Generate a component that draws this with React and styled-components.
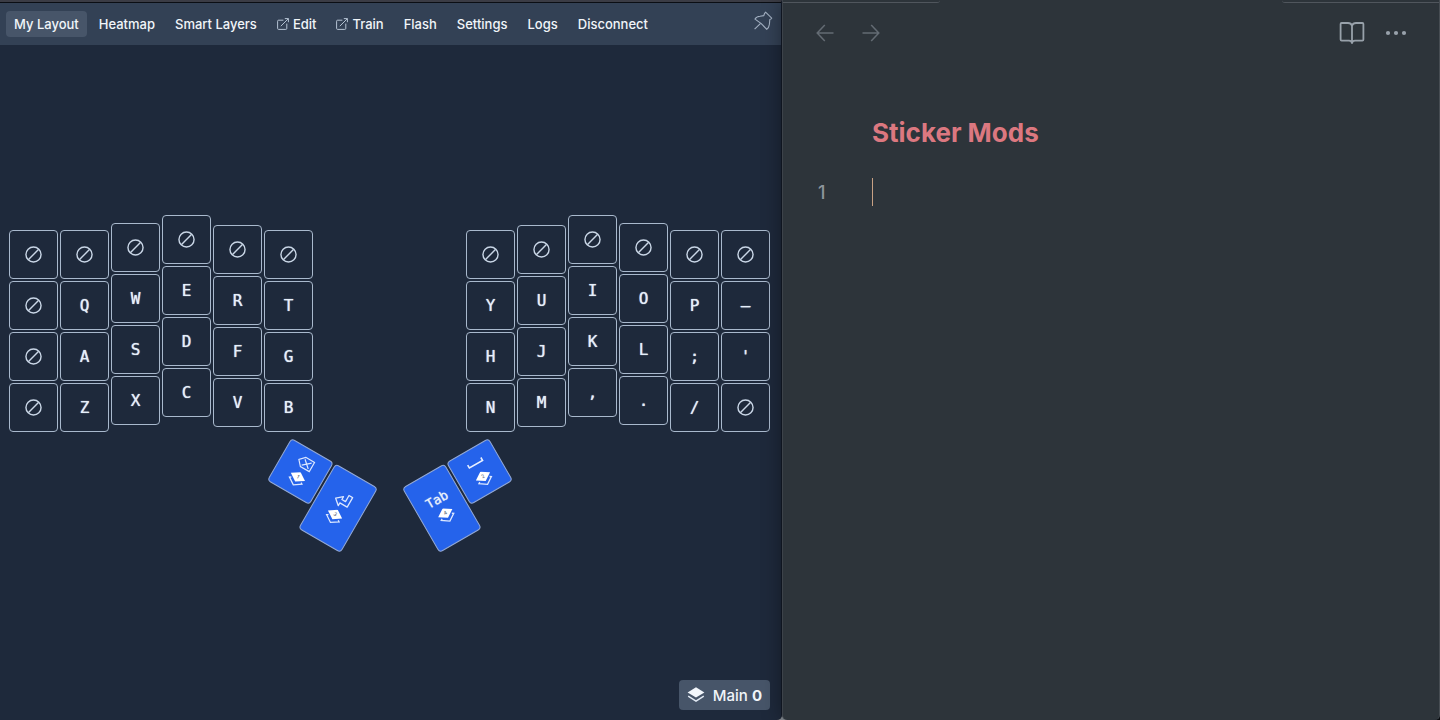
import styled, { createGlobalStyle } from "styled-components";

const leftColumns = [
    { drop: 15, keys: ["", "", "", ""] },
    { drop: 15, keys: ["", "Q", "A", "Z"] },
    { drop: 8, keys: ["", "W", "S", "X"] },
    { drop: 0, keys: ["", "E", "D", "C"] },
    { drop: 10, keys: ["", "R", "F", "V"] },
    { drop: 15, keys: ["", "T", "G", "B"] },
];

const rightColumns = [
    { drop: 15, keys: ["", "Y", "H", "N"] },
    { drop: 10, keys: ["", "U", "J", "M"] },
    { drop: 0, keys: ["", "I", "K", ","] },
    { drop: 8, keys: ["", "O", "L", "."] },
    { drop: 15, keys: ["", "P", ";", "/"] },
    { drop: 15, keys: ["", "–", "'", ""] },
];

const links = [
    { label: "My Layout", active: true },
    { label: "Heatmap" },
    { label: "Smart Layers" },
    { label: "Edit", external: true },
    { label: "Train", external: true },
    { label: "Flash" },
    { label: "Settings" },
    { label: "Logs" },
    { label: "Disconnect" },
];

const NoneIcon = () => (
    <svg width="17" height="17" viewBox="0 0 18 18" fill="none" stroke="#c9d6e6" strokeWidth="1.5">
        <circle cx="9" cy="9" r="8" />
        <path d="M3.5 14.5 14.5 3.5" />
    </svg>
);

const ExternalIcon = () => (
    <svg width="12" height="12" viewBox="0 0 12 12" fill="none" stroke="#b6c3d3" strokeWidth="1">
        <path d="M6.4 2.2H1.6Q.6 2.2.6 3.2V10.4Q.6 11.4 1.6 11.4H8.8Q9.8 11.4 9.8 10.4V5.6" />
        <path d="M3.8 8.2 11.3.7M7.8.6H11.4V4.2" />
    </svg>
);

const PinIcon = () => (
    <svg width="20" height="20" viewBox="0 0 20 20" fill="none" stroke="#a3b0c2" strokeWidth="1.1" strokeLinejoin="round">
        <path d="M12.6 1.2 18.7 7.2Q18 8.4 16.8 8.5L16.4 13.4Q15.8 17 13.8 18.4L8.3 12.6 2 8.1Q3.4 5.5 7 5.3L10.8 4.6Q11.3 2.5 12.6 1.2Z" />
        <path d="M7.6 12.4 1.6 18.2" />
    </svg>
);

const LayersIcon = () => (
    <svg width="18" height="18" viewBox="0 0 18 18">
        <path d="M9 1.2 17.4 6.4 9 11.6.6 6.4Z" fill="#f3f7fc" />
        <path d="M1.2 10.2 9 15.2 16.8 10.2" fill="none" stroke="#e2eaf4" strokeWidth="1.5" />
    </svg>
);

const LayerMark = ({ layer }) => (
    <svg width="18" height="16" viewBox="0 0 18 16">
        <path d="M9 0 17.2 5.4 9 10.8.8 5.4Z" fill="#fff" />
        <path d="M3.4 8.8 1.8 9.8 9 14.6 16.2 9.8 14.6 8.8" fill="none" stroke="#dbe7ff" strokeWidth="1.3" />
        <text x="9" y="7" textAnchor="middle" fontFamily="Inter, sans-serif" fontSize="5" fill="#475569">{layer}</text>
    </svg>
);

const BackspaceIcon = () => (
    <svg width="18" height="14" viewBox="0 0 18 14" fill="none" stroke="#dbe7ff" strokeWidth="1.2">
        <path d="M6 1.6H16.2V12.2H6L1.2 6.9Z" />
        <path d="M6.4 3.6 14 10.4M14 3.6 6.4 10.4" />
    </svg>
);

const EnterIcon = () => (
    <svg width="18" height="16" viewBox="0 0 18 16" fill="none" stroke="#dbe7ff" strokeWidth="1.3" strokeLinejoin="round">
        <path d="M11.6 1H15.8V12H7.4V15.2L1.4 10 7.4 4.8V8H11.6Z" />
    </svg>
);

const SpaceIcon = () => (
    <svg width="18" height="14" viewBox="0 0 18 14" fill="none" stroke="#e8f0ff" strokeWidth="1.6">
        <path d="M1.4 5V8.4H16.6V5" />
    </svg>
);

const Half = ({ columns }) => (
    <Columns>
        {columns.map((column, i) => (
            <Column key={i} $drop={column.drop}>
                {column.keys.map((label, j) => (
                    <Key key={j} aria-label={label ? undefined : "none"}>
                        {label || <NoneIcon />}
                    </Key>
                ))}
            </Column>
        ))}
    </Columns>
);

const App = () => {
    return (
        <Screen>
            <GlobalStyle />
            <KeyboardPane>
                <Toolbar>
                    {links.map((link) => (
                        <ToolLink key={link.label} href="#" $active={link.active}>
                            {link.external && <ExternalIcon />}
                            {link.label}
                        </ToolLink>
                    ))}
                    <PinButton aria-label="Pin window">
                        <PinIcon />
                    </PinButton>
                </Toolbar>

                <Board>
                    <Halves>
                        <Half columns={leftColumns} />
                        <Half columns={rightColumns} />
                    </Halves>
                    <Thumbs>
                        <Cluster $angle={30}>
                            <ThumbKey aria-label="Backspace">
                                <BackspaceIcon />
                                <LayerMark layer="1" />
                            </ThumbKey>
                            <ThumbKey $tall aria-label="Enter">
                                <EnterIcon />
                                <LayerMark layer="3" />
                            </ThumbKey>
                        </Cluster>
                        <Cluster $angle={-30}>
                            <ThumbKey $tall>
                                Tab
                                <LayerMark layer="4" />
                            </ThumbKey>
                            <ThumbKey aria-label="Space">
                                <SpaceIcon />
                                <LayerMark layer="2" />
                            </ThumbKey>
                        </Cluster>
                    </Thumbs>
                    <LayerButton>
                        <LayersIcon />
                        <span>Main <b>0</b></span>
                    </LayerButton>
                </Board>
            </KeyboardPane>

            <NotePane>
                <TabStrip>
                    <TabEdge />
                    <TabEdge $right />
                </TabStrip>
                <NoteBar>
                    <IconGroup $gap={28}>
                        <IconButton $dim aria-label="Back">
                            <svg width="18" height="18" viewBox="0 0 18 18" fill="none" stroke="currentColor" strokeWidth="1.5">
                                <path d="M17.5 9H1.5M8.8 1 1.2 9 8.8 17" />
                            </svg>
                        </IconButton>
                        <IconButton $dim aria-label="Forward">
                            <svg width="18" height="18" viewBox="0 0 18 18" fill="none" stroke="currentColor" strokeWidth="1.5">
                                <path d="M.5 9H16.5M9.2 1 16.8 9 9.2 17" />
                            </svg>
                        </IconButton>
                    </IconGroup>
                    <IconGroup $gap={20}>
                        <IconButton aria-label="Reading view">
                            <svg width="26" height="24" viewBox="0 0 26 24" fill="none" stroke="currentColor" strokeWidth="1.8" strokeLinejoin="round">
                                <path d="M13 4.6Q12 2 9 2H2.6Q1.6 2 1.6 3V18.6Q1.6 19.6 2.6 19.6H10Q12.6 19.6 13 22Q13.4 19.6 16 19.6H23.4Q24.4 19.6 24.4 18.6V3Q24.4 2 23.4 2H17Q14 2 13 4.6V22" />
                            </svg>
                        </IconButton>
                        <IconButton aria-label="More options">
                            <svg width="22" height="24" viewBox="0 0 22 24" fill="currentColor">
                                <circle cx="3" cy="12" r="2.1" />
                                <circle cx="11" cy="12" r="2.1" />
                                <circle cx="19" cy="12" r="2.1" />
                            </svg>
                        </IconButton>
                    </IconGroup>
                </NoteBar>
                <Title>Sticker Mods</Title>
                <Line>
                    <LineNumber>1</LineNumber>
                    <Caret />
                </Line>
            </NotePane>
        </Screen>
    );
};

const GlobalStyle = createGlobalStyle`
    * {
        box-sizing: border-box;
    }

    body {
        margin: 0;
        background: #0b0f14;
    }

    button {
        font: inherit;
        color: inherit;
        cursor: pointer;
    }

    svg {
        display: block;
        flex: none;
    }
`;

const Screen = styled.div`
    display: grid;
    grid-template-columns: 782fr 658fr;
    min-height: 100vh;
    background: linear-gradient(to right, #858b92 75%, #0b0f14 75%);
    font-family: Inter, "Liberation Sans", sans-serif;
`;

const KeyboardPane = styled.section`
    display: flex;
    flex-direction: column;
    border-top: 2px solid #3b3c45;
    border-right: 1px solid #131a28;
    border-bottom-right-radius: 5px;
    background: #1e293b;
`;

const Toolbar = styled.nav`
    display: flex;
    align-items: center;
    gap: 4px;
    height: 43px;
    padding: 0 8px 0 6px;
    border-top: 1px solid #0b0e14;
    background: #334155;
`;

const ToolLink = styled.a`
    display: flex;
    align-items: center;
    gap: 4px;
    height: 26px;
    padding: 0 8px;
    border-radius: 4px;
    background: ${(props) => (props.$active ? "#475569" : "transparent")};
    color: #f1f5f9;
    font-size: 13px;
    font-weight: 500;
    text-decoration: none;
    white-space: nowrap;
`;

const PinButton = styled.button`
    margin-left: auto;
    margin-bottom: 6px;
    padding: 0;
    border: none;
    background: none;
`;

const Board = styled.main`
    position: relative;
    display: flex;
    flex: 1;
    flex-direction: column;
    justify-content: center;
    padding: 0 11px 17px 9px;
`;

const Halves = styled.div`
    display: flex;
    justify-content: space-between;
`;

const Columns = styled.div`
    display: flex;
    gap: 2px;
`;

const Column = styled.div`
    display: flex;
    flex-direction: column;
    gap: 2px;
    padding-top: ${(props) => props.$drop}px;
`;

const Key = styled.button`
    display: flex;
    align-items: center;
    justify-content: center;
    width: 49px;
    height: 49px;
    padding: 0;
    border: 1px solid #a9b9cd;
    border-radius: 4px;
    background: transparent;
    color: #e6effa;
    font-family: "DejaVu Sans Mono", monospace;
    font-size: 16px;
    text-shadow: 0 0 1px currentColor;
`;

const Thumbs = styled.div`
    display: flex;
    justify-content: center;
    gap: 48px;
    margin-top: 26px;
`;

const Cluster = styled.div`
    display: flex;
    align-items: flex-start;
    gap: 2px;
    transform: rotate(${(props) => props.$angle}deg);
`;

const ThumbKey = styled(Key)`
    flex-direction: column;
    gap: 3px;
    height: ${(props) => (props.$tall ? 75 : 49)}px;
    border-color: #93a9d6;
    background: #2563eb;
    font-size: 13px;
    line-height: 14px;
`;

const LayerButton = styled.button`
    position: absolute;
    right: 11px;
    bottom: 10px;
    display: flex;
    align-items: center;
    gap: 8px;
    height: 30px;
    padding: 0 8px;
    border: none;
    border-radius: 4px;
    background: #475569;
    color: #f1f5f9;
    font-size: 15px;
    font-weight: 500;

    b {
        font-weight: 700;
    }
`;

const NotePane = styled.section`
    position: relative;
    display: flex;
    flex-direction: column;
    border-right: 1px solid #474d53;
    border-left: 1px solid #3d434a;
    border-radius: 0 0 5px 5px;
    background: #2d343a;
    box-shadow: 0 0 20px rgba(0, 0, 0, 0.4);
`;

const TabStrip = styled.div`
    display: flex;
    justify-content: space-between;
    height: 3px;
`;

const TabEdge = styled.div`
    width: 24%;
    border-bottom: 1px solid #50565d;
    border-radius: ${(props) => (props.$right ? "0 0 0 4px" : "0 0 4px 0")};
`;

const NoteBar = styled.header`
    display: flex;
    align-items: center;
    justify-content: space-between;
    height: 59px;
    padding: 0 32px 0 33px;
`;

const IconGroup = styled.div`
    display: flex;
    align-items: center;
    gap: ${(props) => props.$gap}px;
`;

const IconButton = styled.button`
    padding: 0;
    border: none;
    background: none;

    && {
        color: ${(props) => (props.$dim ? "#636b73" : "#98a1aa")};
    }
`;

const Title = styled.h1`
    margin: 54px 0 0 89px;
    color: #dc7880;
    font-size: 26px;
    font-weight: 700;
    line-height: 34px;
`;

const Line = styled.div`
    display: flex;
    align-items: center;
    height: 30px;
    margin-top: 27px;
`;

const LineNumber = styled.span`
    width: 89px;
    padding-left: 35px;
    color: #8c949c;
    font-size: 18px;
    font-weight: 500;
`;

const Caret = styled.span`
    width: 1px;
    height: 28px;
    background: #c8a184;
`;

export default App;
